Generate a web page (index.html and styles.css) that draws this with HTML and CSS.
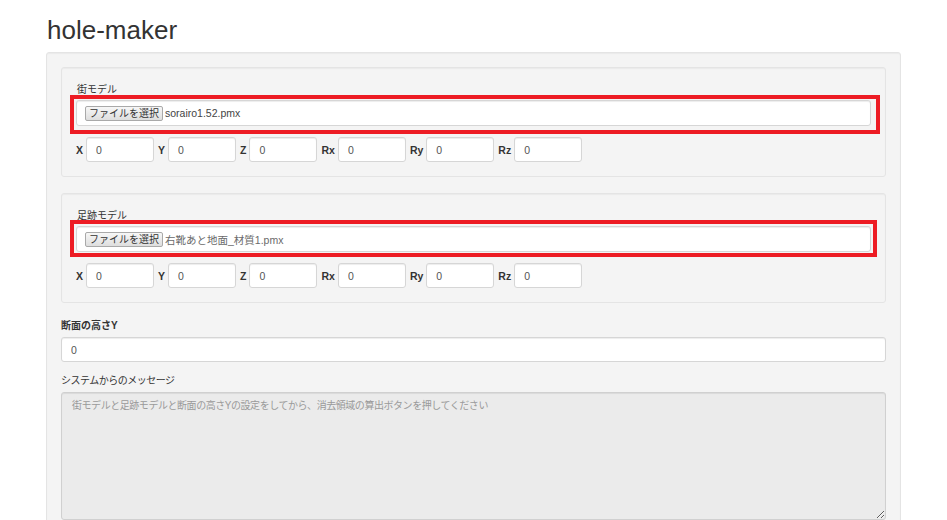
FILE: index.html
```html
<!DOCTYPE html>
<html lang="ja">
<head>
<meta charset="utf-8">
<title>hole-maker</title>
<link rel="stylesheet" href="styles.css">
</head>
<body>
<div class="container">
  <h1 class="title">hole-maker</h1>
  <div class="well outer">
    <div class="well inner">
      <div class="label">街モデル</div>
      <div class="file-wrap">
        <div class="file-input">
          <span class="file-btn">ファイルを選択</span>
          <span class="file-name dark">sorairo1.52.pmx</span>
        </div>
        <div class="mark mark-a"></div>
      </div>
      <div class="axis-row">
        <span class="axis-label">X</span><input class="axis-input" type="text" value="0">
        <span class="axis-label">Y</span><input class="axis-input" type="text" value="0">
        <span class="axis-label">Z</span><input class="axis-input" type="text" value="0">
        <span class="axis-label">Rx</span><input class="axis-input" type="text" value="0">
        <span class="axis-label">Ry</span><input class="axis-input" type="text" value="0">
        <span class="axis-label">Rz</span><input class="axis-input" type="text" value="0">
      </div>
    </div>
    <div class="well inner">
      <div class="label">足跡モデル</div>
      <div class="file-wrap">
        <div class="file-input">
          <span class="file-btn">ファイルを選択</span>
          <span class="file-name light">右靴あと地面_材質1.pmx</span>
        </div>
        <div class="mark mark-b"></div>
      </div>
      <div class="axis-row">
        <span class="axis-label">X</span><input class="axis-input" type="text" value="0">
        <span class="axis-label">Y</span><input class="axis-input" type="text" value="0">
        <span class="axis-label">Z</span><input class="axis-input" type="text" value="0">
        <span class="axis-label">Rx</span><input class="axis-input" type="text" value="0">
        <span class="axis-label">Ry</span><input class="axis-input" type="text" value="0">
        <span class="axis-label">Rz</span><input class="axis-input" type="text" value="0">
      </div>
    </div>
    <div class="label bold">断面の高さY</div>
    <input class="wide-input" type="text" value="0">
    <div class="label msg-label">システムからのメッセージ</div>
    <textarea class="message" readonly placeholder="街モデルと足跡モデルと断面の高さYの設定をしてから、消去領域の算出ボタンを押してください"></textarea>
  </div>
</div>
</body>
</html>
```
FILE: styles.css
```css
html, body {
  margin: 0;
  padding: 0;
  overflow: hidden;
  background: #ffffff;
}
body {
  font-family: "Liberation Sans", "Noto Sans CJK JP", sans-serif;
  font-size: 10.5px;
  color: #333333;
}
.container {
  width: 855px;
  margin-left: 46px;
}
.title {
  margin: 16px 0 7px 1px;
  font-size: 26px;
  line-height: 29px;
  font-weight: normal;
  color: #333333;
}
.well {
  background: #f4f4f4;
  border: 1px solid #e4e4e4;
  border-radius: 3px;
  box-shadow: inset 0 1px 1px rgba(0, 0, 0, 0.04);
  padding: 14px;
}
.outer {
  padding-bottom: 30px;
}
.inner {
  margin-bottom: 15px;
}
.inner + .inner {
  margin-top: 16px;
}
.label {
  font-family: "Liberation Sans", "Noto Sans CJK JP", sans-serif;
  font-size: 10px;
  line-height: 15px;
  margin: 0 0 3px 1px;
  color: #333333;
}
.bold {
  font-weight: bold;
  margin-bottom: 4px;
  margin-left: 0;
}
.msg-label {
  margin-top: 11px;
  margin-bottom: 4px;
  margin-left: 0;
  letter-spacing: -0.5px;
}
.file-wrap {
  position: relative;
  margin-bottom: 11px;
}
.file-input {
  height: 26px;
  box-sizing: border-box;
  background: #ffffff;
  border: 1px solid #d6d6d6;
  border-radius: 3px;
  box-shadow: inset 0 1px 1px rgba(0, 0, 0, 0.075);
  display: flex;
  align-items: center;
  padding-left: 8px;
}
.file-btn {
  box-sizing: border-box;
  height: 15px;
  padding: 0 3px;
  border: 1px solid #a9a9a9;
  border-radius: 2px;
  background: linear-gradient(#f7f7f7, #dedede);
  font-size: 10px;
  line-height: 13px;
  color: #333333;
  white-space: nowrap;
}
.file-name {
  margin-left: 2px;
  font-size: 10.5px;
  white-space: nowrap;
}
.file-name.dark { color: #444444; }
.file-name.light { color: #6a6a6a; }
.mark {
  position: absolute;
  box-sizing: border-box;
  border: 4px solid #ed1c24;
  left: -6px;
}
.mark-a {
  top: -5px;
  width: 810px;
  height: 39px;
}
.mark-b {
  top: -6px;
  width: 807px;
  height: 37px;
}
.axis-row {
  display: flex;
  align-items: center;
  height: 25px;
}
.axis-label {
  font-weight: bold;
  font-size: 10.5px;
  margin-right: 3px;
  color: #333333;
}
.axis-input {
  box-sizing: border-box;
  width: 68px;
  height: 25px;
  margin: 0 4px 0 0;
  padding: 0 9px;
  border: 1px solid #d6d6d6;
  border-radius: 3px;
  box-shadow: inset 0 1px 1px rgba(0, 0, 0, 0.075);
  background: #ffffff;
  font-family: "Liberation Sans", sans-serif;
  font-size: 10.5px;
  color: #555555;
  outline: none;
}
.wide-input {
  display: block;
  box-sizing: border-box;
  width: 100%;
  height: 25px;
  margin: 0;
  padding: 0 9px;
  border: 1px solid #d6d6d6;
  border-radius: 3px;
  box-shadow: inset 0 1px 1px rgba(0, 0, 0, 0.075);
  background: #ffffff;
  font-family: "Liberation Sans", sans-serif;
  font-size: 10.5px;
  color: #555555;
  outline: none;
}
.message {
  display: block;
  box-sizing: border-box;
  width: 100%;
  height: 128px;
  margin: 0;
  padding: 5px 10px;
  border: 1px solid #d0d0d0;
  border-radius: 3px;
  box-shadow: inset 0 1px 1px rgba(0, 0, 0, 0.075);
  background: #ebebeb;
  font-family: "Liberation Sans", "Noto Sans CJK JP", sans-serif;
  font-size: 10px;
  line-height: 15px;
  letter-spacing: -0.45px;
  color: #555555;
  outline: none;
}
.message::placeholder {
  color: #9a9a9a;
  opacity: 1;
}
```
